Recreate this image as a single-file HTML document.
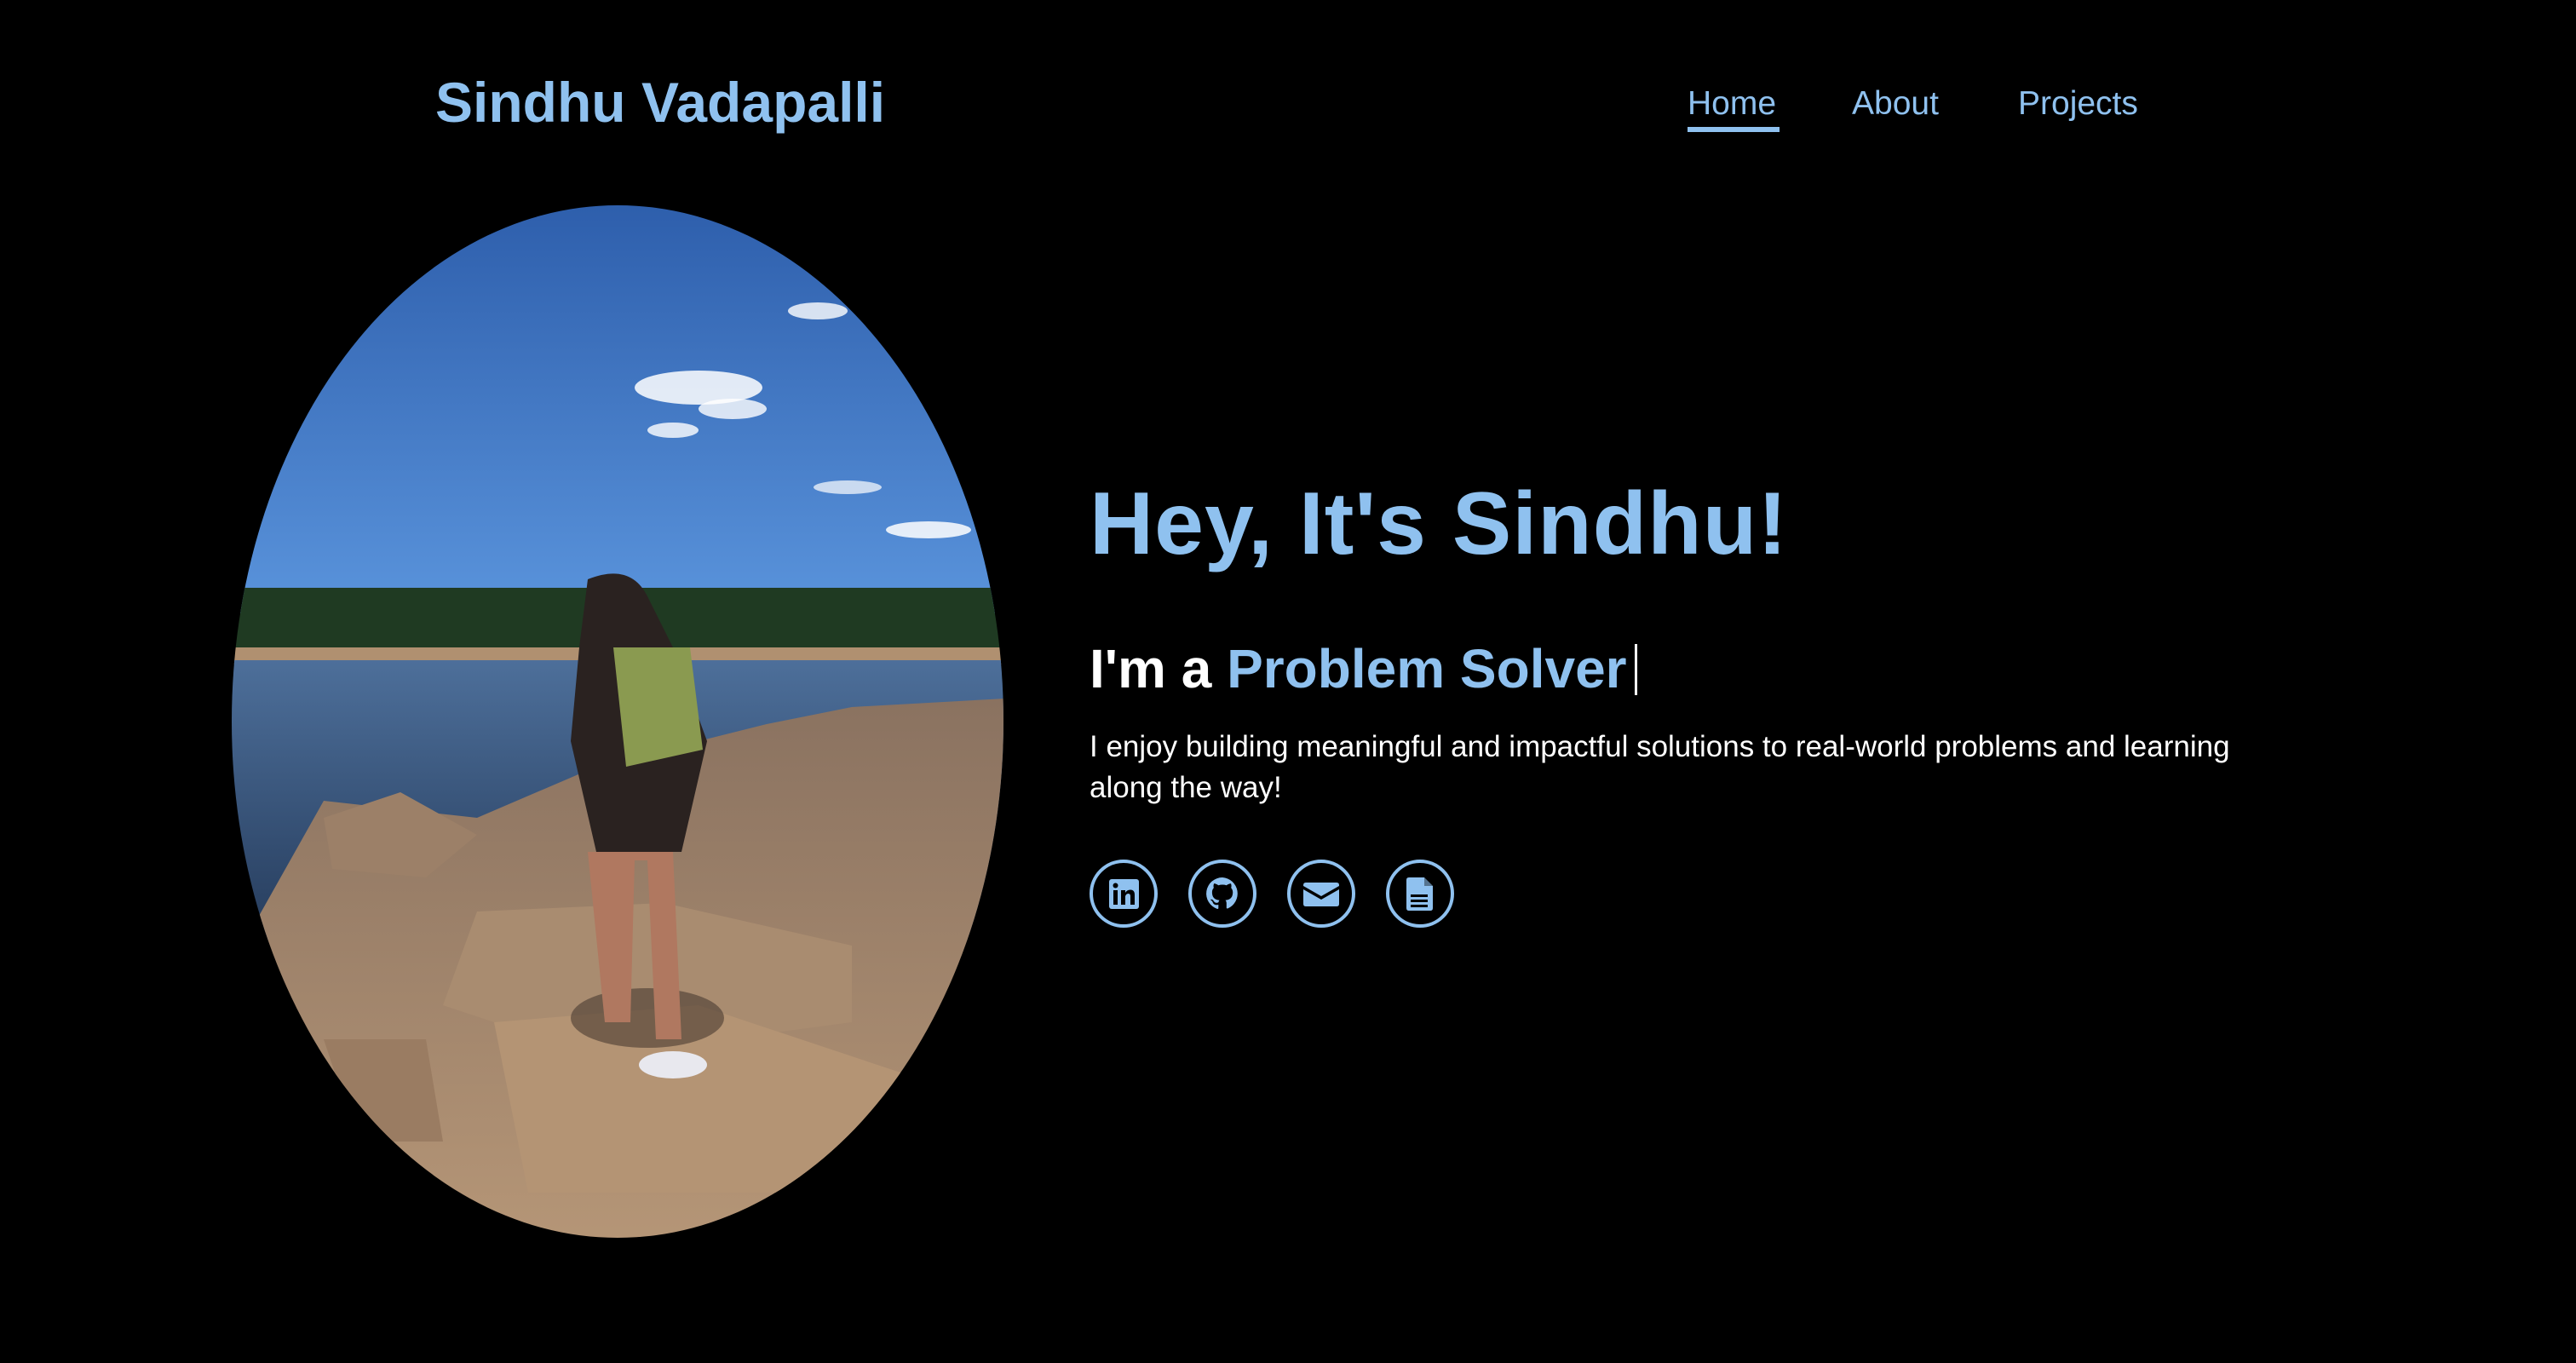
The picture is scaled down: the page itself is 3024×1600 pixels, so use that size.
<!DOCTYPE html>
<html><head><meta charset="utf-8"><style>
html,body{margin:0;padding:0;background:#000;width:3024px;height:1600px;overflow:hidden;font-family:"Liberation Sans",sans-serif;}
.c{color:#8fc1ef;}
.abs{position:absolute;white-space:nowrap;}
</style></head><body>
<div class="abs c" style="left:511px;top:82px;font-size:66px;font-weight:bold;">Sindhu Vadapalli</div>
<div class="abs c" style="left:1981px;top:100px;font-size:39px;">Home</div>
<div class="abs" style="left:1981px;top:149px;width:108px;height:6px;background:#8fc1ef;"></div>
<div class="abs c" style="left:2174px;top:100px;font-size:39px;">About</div>
<div class="abs c" style="left:2369px;top:100px;font-size:39px;">Projects</div>

<svg class="abs" style="left:0;top:0" width="1300" height="1600">
<defs>
<clipPath id="e"><ellipse cx="725" cy="847" rx="453" ry="606"/></clipPath>
<linearGradient id="sky" x1="0" y1="0" x2="0" y2="1"><stop offset="0" stop-color="#2a5aa8"/><stop offset="1" stop-color="#5a94dc"/></linearGradient>
<linearGradient id="wat" x1="0" y1="0" x2="0" y2="1"><stop offset="0" stop-color="#4d6f9a"/><stop offset="1" stop-color="#263c5c"/></linearGradient>
<linearGradient id="rk" x1="0" y1="0" x2="0" y2="1"><stop offset="0" stop-color="#8a7260"/><stop offset="1" stop-color="#b89878"/></linearGradient>
</defs>
<g clip-path="url(#e)">
<rect x="0" y="200" width="1300" height="520" fill="url(#sky)"/>
<ellipse cx="820" cy="455" rx="75" ry="20" fill="#fff" opacity=".85"/>
<ellipse cx="860" cy="480" rx="40" ry="12" fill="#fff" opacity=".8"/>
<ellipse cx="790" cy="505" rx="30" ry="9" fill="#fff" opacity=".8"/>
<ellipse cx="960" cy="365" rx="35" ry="10" fill="#fff" opacity=".8"/>
<ellipse cx="1090" cy="622" rx="50" ry="10" fill="#fff" opacity=".85"/>
<ellipse cx="995" cy="572" rx="40" ry="8" fill="#fff" opacity=".7"/>
<rect x="0" y="690" width="1300" height="70" fill="#1f3a22"/>
<rect x="0" y="760" width="1300" height="20" fill="#b09070"/>
<rect x="0" y="775" width="1300" height="330" fill="url(#wat)"/>
<path d="M290 1100 L380 940 L560 960 L700 900 L900 850 L1000 830 L1180 820 L1180 1500 L270 1500Z" fill="url(#rk)"/>
<path d="M380 960 L470 930 L560 980 L500 1030 L390 1020Z" fill="#9c8068"/>
<path d="M560 1070 L780 1060 L1000 1110 L1000 1200 L700 1240 L520 1180Z" fill="#a98c70"/>
<path d="M580 1200 L820 1180 L1060 1260 L1040 1400 L620 1400Z" fill="#b49474"/>
<path d="M380 1220 L500 1220 L520 1340 L420 1340Z" fill="#9a7c62"/>
<ellipse cx="760" cy="1195" rx="90" ry="35" fill="#4a3a30" opacity=".6"/>
<path d="M690 680 Q740 660 760 700 L790 760 L830 870 L800 1000 L700 1000 L670 870 L680 760Z" fill="#2a2220"/>
<path d="M720 760 L810 760 L825 880 L735 900Z" fill="#8a9a50"/>
<path d="M690 1000 L710 1200 L740 1200 L745 1010 L760 1010 L770 1220 L800 1220 L790 1000Z" fill="#b07860"/>
<ellipse cx="790" cy="1250" rx="40" ry="16" fill="#e8e8ee"/>
</g>
</svg>

<div class="abs c" style="left:1279px;top:556px;font-size:104px;font-weight:bold;letter-spacing:1px;">Hey, It's Sindhu!</div>
<div class="abs" style="left:1279px;top:748px;font-size:64px;font-weight:bold;color:#fff;">I'm a <span class="c">Problem Solver</span></div>
<div class="abs" style="left:1919px;top:756px;width:3px;height:60px;background:#fff;"></div>
<div class="abs" style="left:1279px;top:853px;font-size:35px;line-height:48px;color:#fff;">I enjoy building meaningful and impactful solutions to real-world problems and learning<br>along the way!</div>

<svg class="abs" style="left:1270px;top:1000px" width="450" height="100" viewBox="0 0 450 100">
<g fill="none" stroke="#8fc1ef" stroke-width="4">
<circle cx="49" cy="49" r="38"/><circle cx="165" cy="49" r="38"/><circle cx="281" cy="49" r="38"/><circle cx="397" cy="49" r="38"/>
</g>
<g fill="#8fc1ef">
<rect x="32" y="32" width="35" height="35" rx="3"/>
<g fill="#000"><rect x="37" y="45" width="5" height="17"/><circle cx="39.5" cy="39.5" r="3"/><path d="M46 45h5v3q2-3.5 6-3.5q5 0 5 6v11.5h-5v-10q0-3-2.5-3t-3.5 3v10h-5z"/></g>
<path d="M165 30a19 19 0 0 0-6 37c1 0 1.3-.4 1.3-1v-4c-5.3 1.2-6.4-2.3-6.4-2.3-.9-2.2-2.1-2.8-2.1-2.8-1.7-1.2.1-1.2.1-1.2 1.9.1 2.9 2 2.9 2 1.7 2.9 4.5 2.1 5.6 1.600.2-1.2.7-2.1 1.2-2.5-4.2-.5-8.7-2.1-8.7-9.4 0-2.1.7-3.8 2-5.1-.2-.5-.8-2.4.2-5 0 0 1.6-.5 5.2 1.9a18 18 0 0 1 9.5 0c3.6-2.4 5.2-1.9 5.2-1.9 1 2.6.4 4.5.2 5 1.2 1.3 2 3 2 5.1 0 7.3-4.5 8.9-8.7 9.4.7.6 1.3 1.8 1.3 3.5v5.2c0 .6.3 1.1 1.3 1A19 19 0 0 0 165 30z"/>
<path d="M263 36h36q3 0 3 3v1l-21 12-21-12v-1q0-3 3-3z"/>
<path d="M260 44l21 12 21-12v17q0 3-3 3h-36q-3 0-3-3z"/>
<path d="M384 30h18l10 10v26q0 3-3 3h-25q-3 0-3-3v-33q0-3 3-3z"/>
<path d="M402 30v10h10z" fill="#000" opacity=".4"/>
<g fill="#000"><rect x="386" y="50" width="20" height="3"/><rect x="386" y="56" width="20" height="3"/><rect x="386" y="62" width="20" height="3"/></g>
</g>
</svg>
</body></html>
